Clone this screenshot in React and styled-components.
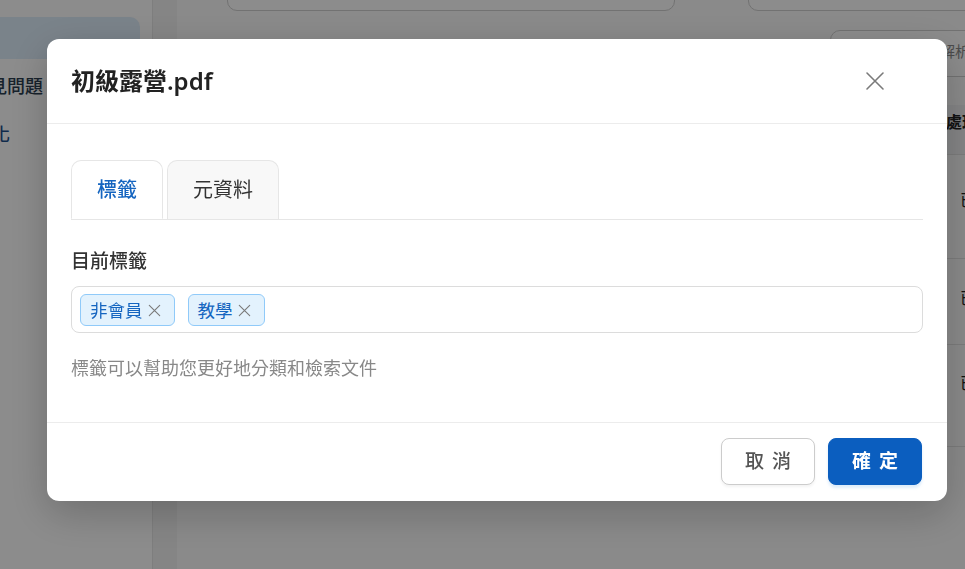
import React from "react";
import styled, { createGlobalStyle } from "styled-components";

const GlobalStyle = createGlobalStyle`
  html, body { margin: 0; padding: 0; height: 100%; overflow: hidden; }
  body { font-family: "Noto Sans", "Noto Sans CJK TC", sans-serif; }
  #root { height: 100%; }
  * { box-sizing: border-box; }
`;

/* ---------- background page ---------- */
const Page = styled.div`
  display: flex;
  height: 100vh;
  width: 100%;
  background: #f3f3f3;
  overflow: hidden;
`;

const Sidebar = styled.aside`
  width: 153px;
  flex-shrink: 0;
  background: #fff;
  border-right: 1px solid #e6e6e6;
  padding-top: 17px;
  display: flex;
  flex-direction: column;
  gap: 6px;
`;

const NavItem = styled.div`
  width: 140px;
  height: 42px;
  display: flex;
  align-items: center;
  border-radius: 0 10px 10px 0;
  background: ${(p) => (p.$active ? "#dfeefb" : "transparent")};
  color: ${(p) => p.$color || "#2c3e50"};
  font-size: 18px;
  font-weight: 500;
  line-height: 24px;
  white-space: nowrap;
`;

const NavLabel = styled.span`
  margin-left: ${(p) => p.$shift}px;
`;

const Main = styled.main`
  flex: 1;
  padding-left: 24px;
  min-width: 0;
`;

const Card = styled.section`
  width: 1100px;
  margin-top: -30px;
  background: #fcfcfc;
  padding-left: 50px;
  min-height: 700px;
`;

const FilterRow = styled.div`
  display: flex;
  gap: 73px;
`;

const FilterInput = styled.div`
  width: ${(p) => p.$w}px;
  height: 41px;
  border: 1px solid #cfcfcf;
  border-radius: 10px;
  background: #fff;
  padding: 0 14px;
  display: flex;
  align-items: center;
  color: #999;
  font-size: 15px;
`;

const ActionRow = styled.div`
  display: flex;
  padding-left: 603px;
  margin-top: 19px;
`;

const ActionBox = styled.div`
  width: 250px;
  height: 47px;
  border: 1px solid #cfcfcf;
  border-radius: 10px;
  background: #fff;
  display: flex;
  align-items: center;
  justify-content: center;
  padding-bottom: 6px;
  color: #8a8a8a;
  font-size: 15px;
`;

const Table = styled.div`
  margin-top: 28px;
  width: 900px;
`;

const TRow = styled.div`
  display: grid;
  grid-template-columns: 703px 1fr;
  height: ${(p) => p.$h}px;
  background: ${(p) => (p.$head ? "#f1f2f4" : "transparent")};
  border-bottom: 1px solid #e2e2e2;
  font-size: 16px;
  font-weight: ${(p) => (p.$head ? 700 : 400)};
  color: #222;
`;

const TCell = styled.div`
  padding: ${(p) => p.$pt}px 16px 0 ${(p) => p.$pl || 16}px;
  line-height: 22px;
`;

/* ---------- modal ---------- */
const Overlay = styled.div`
  position: fixed;
  inset: 0;
  background: rgba(0, 0, 0, 0.45);
  display: flex;
  align-items: flex-start;
  padding: 39px 0 0 47px;
`;

const Dialog = styled.div`
  width: 900px;
  background: #fff;
  border-radius: 12px;
  box-shadow: 0 12px 40px rgba(0, 0, 0, 0.22);
  display: flex;
  flex-direction: column;
`;

const Header = styled.header`
  height: 85px;
  padding: 0 24px;
  display: flex;
  align-items: center;
  justify-content: space-between;
  border-bottom: 1px solid #ececec;
`;

const Title = styled.h2`
  margin: 0;
  font-size: 24px;
  font-weight: 600;
  color: #222;
  line-height: 32px;
`;

const CloseButton = styled.button`
  width: 40px;
  height: 40px;
  margin-right: 28px;
  border: none;
  background: transparent;
  padding: 0;
  display: flex;
  align-items: center;
  justify-content: center;
  cursor: pointer;
`;

const Body = styled.div`
  padding: 36px 24px 41px;
`;

const Tabs = styled.div`
  display: flex;
  gap: 4px;
  border-bottom: 1px solid #e6e6e6;
`;

const Tab = styled.div`
  height: 59px;
  padding: 0 25px;
  display: flex;
  align-items: center;
  font-size: 20px;
  line-height: 28px;
  border: 1px solid #e6e6e6;
  border-bottom: ${(p) => (p.$active ? "1px solid #fff" : "none")};
  border-radius: 10px 10px 0 0;
  margin-bottom: ${(p) => (p.$active ? "-1px" : "0")};
  background: ${(p) => (p.$active ? "#fff" : "#f8f8f8")};
  color: ${(p) => (p.$active ? "#1565c0" : "#333")};
  font-weight: ${(p) => (p.$active ? 500 : 400)};
`;

const FieldLabel = styled.div`
  margin-top: 27px;
  font-size: 19px;
  font-weight: 500;
  color: #333;
  line-height: 28px;
`;

const TagBox = styled.div`
  margin-top: 11px;
  height: 47px;
  border: 1px solid #dcdcdc;
  border-radius: 8px;
  padding: 7px 8px 0;
  display: flex;
  align-items: flex-start;
  gap: 13px;
`;

const Tag = styled.span`
  height: 32px;
  display: inline-flex;
  align-items: center;
  gap: 4px;
  padding: 0 11px 0 9px;
  background: #e3f2fd;
  border: 1px solid #90caf9;
  border-radius: 6px;
  color: #1565c0;
  font-size: 17.5px;
  line-height: 24px;
`;

const TagRemove = styled.span`
  display: inline-flex;
  width: 16px;
  height: 16px;
  align-items: center;
  justify-content: center;
`;

const Hint = styled.p`
  margin: 23px 0 0;
  font-size: 18px;
  line-height: 25px;
  color: #888;
`;

const Footer = styled.footer`
  border-top: 1px solid #ececec;
  padding: 15px 25px 16px 24px;
  display: flex;
  justify-content: flex-end;
  gap: 13px;
`;

const Button = styled.button`
  width: 94px;
  height: 47px;
  border-radius: 8px;
  padding: 0 0 0 8px;
  font-family: inherit;
  font-size: 19px;
  letter-spacing: 8px;
  line-height: 1;
  cursor: pointer;
  display: flex;
  align-items: center;
  justify-content: center;
  border: 1px solid ${(p) => (p.$primary ? "#0b5ebf" : "#cccccc")};
  background: ${(p) => (p.$primary ? "#0b5ebf" : "#fff")};
  color: ${(p) => (p.$primary ? "#fff" : "#555")};
  font-weight: ${(p) => (p.$primary ? 700 : 500)};
  box-shadow: ${(p) =>
    p.$primary ? "0 3px 3px rgba(66, 150, 230, 0.18)" : "0 2px 3px rgba(0, 0, 0, 0.05)"};
`;

const XIcon = ({ size, color, width }) => (
  <svg width={size} height={size} viewBox="0 0 20 20" fill="none">
    <path d="M2 2 L18 18 M18 2 L2 18" stroke={color} strokeWidth={width} strokeLinecap="round" />
  </svg>
);

export default function App() {
  const tags = ["非會員", "教學"];
  return (
    <>
      <GlobalStyle />
      <Page>
        <Sidebar>
          <NavItem $active aria-label="文件管理" />
          <NavItem>
            <NavLabel $shift={-29}>常見問題</NavLabel>
          </NavItem>
          <NavItem $color="#1e4f8a">
            <NavLabel $shift={-80}>文件數位化</NavLabel>
          </NavItem>
        </Sidebar>
        <Main>
          <Card>
            <FilterRow>
              <FilterInput $w={448}>搜尋文件名稱</FilterInput>
              <FilterInput $w={400}>全部分類</FilterInput>
            </FilterRow>
            <ActionRow>
              <ActionBox>重新解析標籤</ActionBox>
            </ActionRow>
            <Table>
              <TRow $head $h={50}>
                <TCell $pt={6}>文件名稱</TCell>
                <TCell $pt={6}>處理狀態</TCell>
              </TRow>
              <TRow $h={104}>
                <TCell $pt={34}>初級露營.pdf</TCell>
                <TCell $pt={34} $pl={30}>已完成</TCell>
              </TRow>
              <TRow $h={86}>
                <TCell $pt={28}>野外求生手冊.pdf</TCell>
                <TCell $pt={28} $pl={30}>已完成</TCell>
              </TRow>
              <TRow $h={102}>
                <TCell $pt={27}>童軍繩結圖解.pdf</TCell>
                <TCell $pt={27} $pl={30}>已完成</TCell>
              </TRow>
            </Table>
          </Card>
        </Main>
      </Page>

      <Overlay>
        <Dialog role="dialog" aria-modal="true">
          <Header>
            <Title>初級露營.pdf</Title>
            <CloseButton aria-label="關閉">
              <XIcon size={20} color="#7a7a7a" width={1.6} />
            </CloseButton>
          </Header>
          <Body>
            <Tabs>
              <Tab $active>標籤</Tab>
              <Tab>元資料</Tab>
            </Tabs>
            <FieldLabel>目前標籤</FieldLabel>
            <TagBox>
              {tags.map((t) => (
                <Tag key={t}>
                  {t}
                  <TagRemove>
                    <XIcon size={13} color="#7a7a7a" width={1.7} />
                  </TagRemove>
                </Tag>
              ))}
            </TagBox>
            <Hint>標籤可以幫助您更好地分類和檢索文件</Hint>
          </Body>
          <Footer>
            <Button>取消</Button>
            <Button $primary>確定</Button>
          </Footer>
        </Dialog>
      </Overlay>
    </>
  );
}
